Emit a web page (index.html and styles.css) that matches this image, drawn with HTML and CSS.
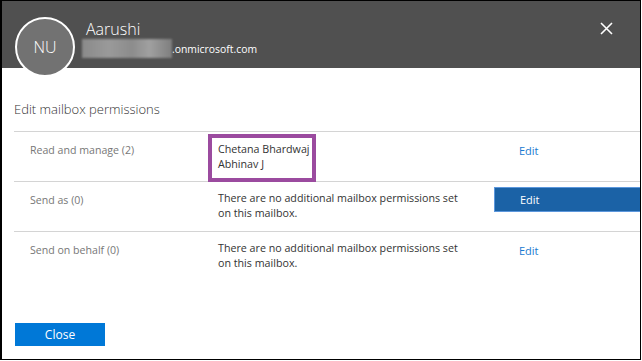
FILE: index.html
```html
<!DOCTYPE html>
<html lang="en">
<head>
  <meta charset="UTF-8" />
  <title>Edit mailbox permissions</title>
  <link rel="stylesheet" href="styles.css">
</head>
<body>

<div class="frame">
  <header class="head">
    <div class="avatar">NU</div>
    <div class="who">
      <div class="name">Aarushi</div>
      <div class="mail"><span class="blur"></span>.onmicrosoft.com</div>
    </div>
    <button class="dismiss" aria-label="Close">
      <svg width="13" height="13" viewBox="0 0 13 13"><path d="M1 1L12 12M12 1L1 12" stroke="#fff" stroke-width="1.6" fill="none"/></svg>
    </button>
  </header>

  <main class="body">
    <h2 class="title">Edit mailbox permissions</h2>

    <div class="perms">
      <div class="row">
        <div class="label">Read and manage (2)</div>
        <div class="desc names">
          <span class="mark"></span>
          Chetana Bhardwaj<br>Abhinav J
        </div>
        <div class="act"><a class="link" href="#">Edit</a></div>
      </div>
      <div class="row">
        <div class="label">Send as (0)</div>
        <div class="desc">There are no additional mailbox permissions set on this mailbox.</div>
        <div class="act"><a class="link btn" href="#">Edit</a></div>
      </div>
      <div class="row">
        <div class="label">Send on behalf (0)</div>
        <div class="desc">There are no additional mailbox permissions set on this mailbox.</div>
        <div class="act"><a class="link" href="#">Edit</a></div>
      </div>
    </div>

    <div class="foot">
      <button class="close">Close</button>
    </div>
  </main>
</div>

</body>
</html>
```

FILE: styles.css
```css
body { margin: 0; background: #fff; font-family: "Open Sans", "Noto Sans", sans-serif; }
.frame {
  width: 638px; height: 358px; margin: 0 1px 0 0;
  border-top: 1px solid #000; border-bottom: 1px solid #000;
  border-left: 2px solid #000; border-right: 1px solid #000;
  background: #fff; overflow: hidden; position: relative;
  display: flex; flex-direction: column;
}
.head {
  height: 67px; background: #505050; color: #fff;
  display: flex; align-items: flex-start; padding-left: 13px; position: relative;
  flex-shrink: 0;
}
.avatar {
  width: 56px; height: 56px; margin-top: 16px; border: 2px solid #fff; border-radius: 50%;
  background: #727272; color: #fff; font-size: 16px; font-weight: 300;
  display: flex; align-items: center; justify-content: center; position: relative; z-index: 2;
  flex-shrink: 0;
}
.who { margin-left: 11px; margin-top: 18px; }
.name { font-size: 16px; font-weight: 300; line-height: 21px; }
.mail { font-size: 10.4px; line-height: 18px; margin-top: -1px; margin-left: -4px; display: flex; align-items: center; }
.blur {
  display: inline-block; width: 90px; height: 19px;
  background: linear-gradient(90deg, #8a8a8a, #9a9a9a 30%, #8c8c8c 55%, #a0a0a0 75%, #7e7e7e);
  filter: blur(0.8px);
}
.dismiss {
  position: absolute; right: 27px; top: 21px; background: none; border: none; padding: 0; cursor: pointer;
}
.body { flex: 1; display: flex; flex-direction: column; padding-left: 12px; }
.title { margin: 31px 0 0; font-size: 13px; font-weight: 300; color: #333; line-height: 20px; height: 32px; }
.perms { display: flex; flex-direction: column; }
.row {
  display: grid; grid-template-columns: 204px 276px 1fr;
  border-top: 1px solid #d4d4d4; min-height: 49px; font-size: 10.6px; line-height: 15px;
}
.label { color: #777; padding: 11px 0 0 16px; }
.desc { color: #333; padding-top: 9px; max-width: 252px; font-size: 10.7px; }
.names { position: relative; padding-top: 10px; }
.mark {
  position: absolute; left: -10px; top: 2px; width: 100px; height: 40px;
  border: 4px solid #9b4b9f;
}
.act { padding-top: 9px; font-size: 11px; }
.link { color: #1979d0; text-decoration: none; padding-left: 25px; display: block; line-height: 20px; }
.btn {
  margin-top: -4px; height: 23px; line-height: 23px; color: #fff;
  background: #1b62a6; border: 1px solid #5c97dc; border-right: none;
}
.foot { margin-top: auto; padding: 0 0 13px 1px; }
.close {
  width: 90px; height: 23px; background: #0078d7; color: #fff; border: none;
  font-family: inherit; font-size: 12px; padding: 0; cursor: pointer;
}
```
